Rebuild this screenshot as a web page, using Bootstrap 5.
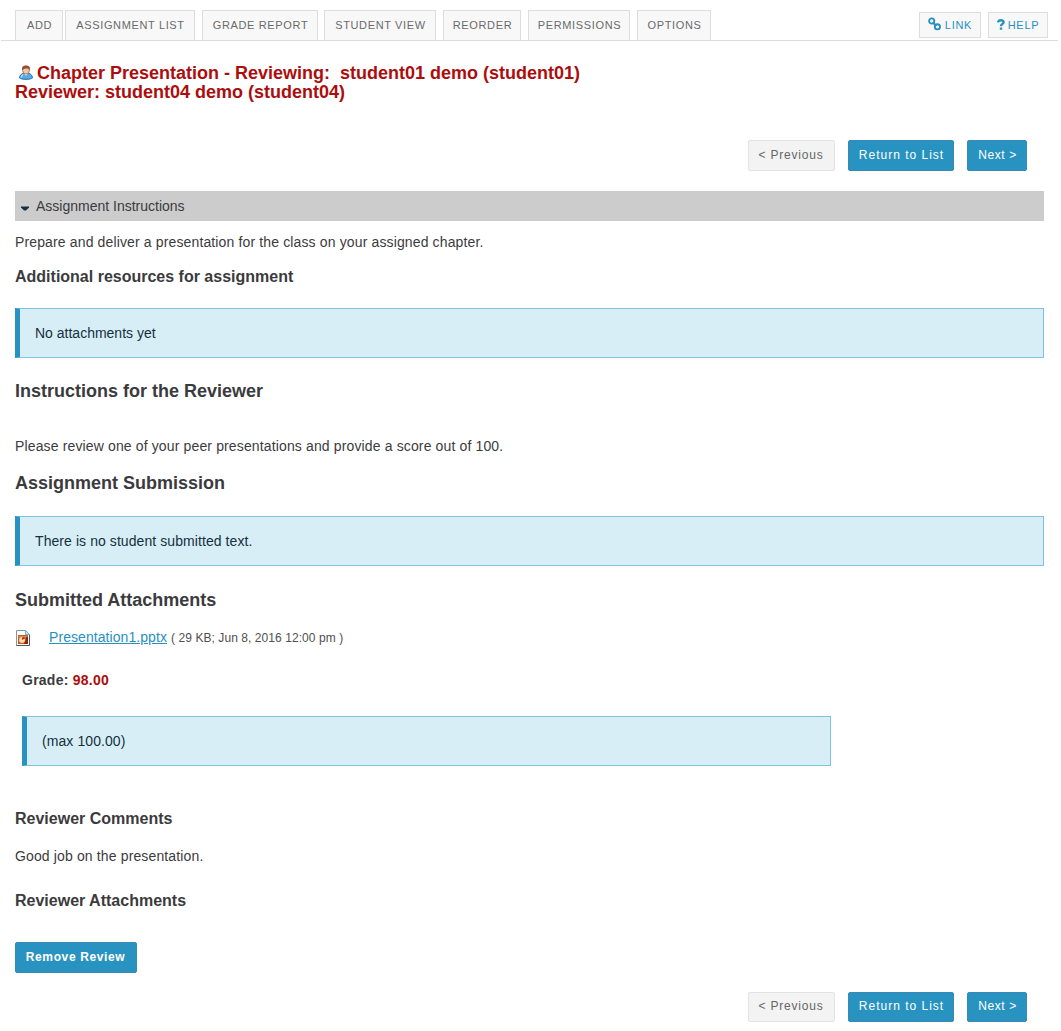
<!DOCTYPE html>
<html lang="en">
<head>
<meta charset="utf-8">
<meta name="viewport" content="width=device-width, initial-scale=1">
<title>Chapter Presentation - Reviewing</title>
<link rel="stylesheet" href="https://cdn.jsdelivr.net/npm/bootstrap@5.3.0/dist/css/bootstrap.min.css">
<style>
body{font-family:"Liberation Sans",Arial,sans-serif;font-size:14px;line-height:20px;color:#3b3b3e;background:#fff}
.tool-bar{height:41px;margin:0 3px 0 1px;padding:10px 10px 0 14px;border-bottom:1px solid #ddd}
.tool-tabs .nav-link{height:30px;padding:0;border:1px solid #ddd;border-bottom:0;border-radius:0;background:#f8f8f8;color:#6a6a6a;font-size:11px;line-height:29px;letter-spacing:.64px;text-align:center;text-transform:uppercase;white-space:nowrap;text-indent:1px}
.t-add{width:48px;margin-right:2px}.t-list{width:130px;margin-right:7px}.t-grade{width:116px;margin-right:6px}.t-student{width:112px;margin-right:7px}.t-reorder{width:78px;margin-right:7px}.t-perm{width:102px;margin-right:7px}.t-opt{width:74px}
.tool-links{gap:7px}
.btn-tool{--bs-btn-padding-x:0;--bs-btn-padding-y:0;height:26px;margin-top:2px;border:1px solid #ddd;border-radius:0;background:#f8f8f8;color:#2890c0;font-size:11px;letter-spacing:.7px;line-height:24px}
.b-link{width:62px}.b-help{width:60px}
.b-link svg{margin:-3px 4px 0 0}.b-help svg{margin:-1px 3px 0 0}
.page-main{margin:23px 17px 0 15px}
.page-title{font-size:18px;line-height:19px;font-weight:700;color:#ac0d0d;margin:0 0 38px}
.user-icon{width:14px;height:15px;margin:0 4px 0 4px;vertical-align:-1px}
.pager{gap:13px;padding-right:17px}
.btn-act{--bs-btn-padding-x:0;--bs-btn-padding-y:0;--bs-btn-font-size:12px;--bs-btn-line-height:28px;--bs-btn-border-radius:2px;letter-spacing:1px;height:31px;padding-bottom:1px;padding-left:1px;
 --bs-btn-bg:#2893c1;--bs-btn-color:#fff;--bs-btn-border-color:#3989b5;--bs-btn-hover-bg:#217ca4;--bs-btn-hover-color:#fff}
.btn-act{display:flex;align-items:flex-start;justify-content:center;--bs-btn-line-height:29px}
.btn-prev{--bs-btn-bg:#f3f3f3;--bs-btn-color:#666;--bs-btn-border-color:#e6e2e2;--bs-btn-hover-bg:#e8e8e8;--bs-btn-hover-color:#444}
.w-prev{width:87px;letter-spacing:.8px;padding-right:1px;padding-left:0}.w-list{width:106px}.w-next{width:60px;letter-spacing:.6px}.w-remove{width:122px;letter-spacing:.62px;margin-top:31px;padding-left:0;padding-right:1px}
.pager-end{margin-top:19px}
.pager-end .btn-act{height:30px;--bs-btn-line-height:27px}
.section-bar{height:30px;margin-top:20px;padding-left:6px;background:#ccc}
.section-bar svg{margin:4px 7px 0 0}
h2,h3,p{margin:0}
h2{font-size:18px;font-weight:700;line-height:20px}
h3{font-size:16px;font-weight:700;line-height:20px}
.prose{letter-spacing:.137px}
.after-bar{margin-top:11px}.h-res{margin-top:15px}.box-res{margin-top:21px!important}
.h-instr{margin-top:23px}.p-instr{margin-top:35px}.h-sub{margin-top:17px}.box-sub{margin-top:23px!important;letter-spacing:.075px}
.h-att{margin-top:24px}.h-com{margin-top:43px}.p-com{margin-top:17px}.h-ratt{margin-top:25px}
.info-box{height:50px;padding:0 15px;border:1px solid #7cc4de;border-left:5px solid #2893c1;border-radius:0;background:#d8eef7;color:#15303e;margin:0}
.file-row{height:20px;margin-top:17px}
.file-row svg{margin:2px 18px 0 0}
.file-row a{color:#2890c0;text-decoration:underline;text-underline-offset:1px;letter-spacing:.07px}
.file-meta{font-size:12px;margin-left:4px;padding-top:1px;color:#505050;letter-spacing:.07px}
.grade-line{margin:23px 0 0 7px;letter-spacing:.25px}
.grade-box{margin:26px 213px 0 7px;letter-spacing:.08px}
.score{color:#ac0d0d}
</style>
</head>
<body>
<nav class="tool-bar d-flex justify-content-between align-items-start">
 <div class="nav tool-tabs flex-nowrap">
  <a class="nav-link t-add" href="#">Add</a><a class="nav-link t-list" href="#">Assignment List</a><a class="nav-link t-grade" href="#">Grade Report</a><a class="nav-link t-student" href="#">Student View</a><a class="nav-link t-reorder" href="#">Reorder</a><a class="nav-link t-perm" href="#">Permissions</a><a class="nav-link t-opt" href="#">Options</a>
 </div>
 <div class="tool-links d-flex">
  <a class="btn btn-tool b-link d-flex justify-content-center align-items-center" href="#"><svg width="13" height="14" viewBox="0 0 13 14" fill="none" stroke="#2890c0" stroke-width="1.900"><circle cx="3.700" cy="4" r="2.600"/><circle cx="9.400" cy="9.800" r="2.600"/><path d="M4.600 5.600 8.500 8.800"/></svg>LINK</a>
  <a class="btn btn-tool b-help d-flex justify-content-center align-items-center" href="#"><svg width="8" height="11" viewBox="0 0 8 11" fill="none" stroke="#2890c0" stroke-width="2.400"><path d="M1 3.400C1.400.6 6.600.6 6.600 3.200 6.600 5 4 4.800 4 7.200M4 8.400V10.800"/></svg>HELP</a>
 </div>
</nav>
<main class="page-main">
 <h1 class="page-title"><svg class="user-icon" viewBox="0 0 14 15"><path d="M.5 13C.5 10.500 2.500 8.500 5 8h4c2.500.5 4.500 2.500 4.500 5-2 1.800-11 1.800-13 0Z" fill="#58aae4" stroke="#286fae"/><path d="M2.200 12.500c0-1.500.8-2.500 2-3" stroke="#b9e0fa" stroke-width="1.300" fill="none"/><path d="M5 8.200 7 10.800 9 8.200Z" fill="#fff"/><ellipse cx="7" cy="5.300" rx="3.400" ry="3.800" fill="#f4c6a0" stroke="#a66b4b" stroke-width=".8"/><path d="M3.100 5.500C2.500 1.500 4.300.4 7 .4s4.500 1.100 3.900 5.100C10 4.500 9.800 3.500 8.500 3.400 6.500 3.600 4.500 3.300 3.100 5.500Z" fill="#8d5137"/></svg>Chapter Presentation - Reviewing:&nbsp; student01 demo (student01)<br>Reviewer: student04 demo (student04)</h1>
 <div class="pager d-flex justify-content-end">
  <button class="btn btn-act btn-prev w-prev">&lt; Previous</button><button class="btn btn-act w-list">Return to List</button><button class="btn btn-act w-next">Next &gt;</button>
 </div>
 <div class="section-bar d-flex align-items-center"><svg width="8" height="5" viewBox="0 0 8 5"><path d="M0 .500H8V1.500L5 4.500H3L0 1.500Z" fill="#10324a"/></svg>Assignment Instructions</div>
 <p class="prose after-bar">Prepare and deliver a presentation for the class on your assigned chapter.</p>
 <h3 class="h-res">Additional resources for assignment</h3>
 <div class="alert info-box box-res d-flex align-items-center">No attachments yet</div>
 <h2 class="h-instr">Instructions for the Reviewer</h2>
 <p class="prose p-instr">Please review one of your peer presentations and provide a score out of 100.</p>
 <h2 class="h-sub">Assignment Submission</h2>
 <div class="alert info-box box-sub d-flex align-items-center">There is no student submitted text.</div>
 <h2 class="h-att">Submitted Attachments</h2>
 <div class="file-row d-flex align-items-center">
  <svg width="16" height="16" viewBox="0 0 16 16"><path d="M1.500.5h9l4 4v11h-13Z" fill="#fff" stroke="#8496a5"/><path d="M14.500 5v10.500h-13" fill="none" stroke="#555"/><path d="M10.500.5v4h4Z" fill="#c9edfa" stroke="#5fb5dc"/><rect x="3" y="5" width="10" height="9" fill="#c35a24"/><path d="M3.500 6h9v1.500h-9Z" fill="#e08a45"/><circle cx="7" cy="10" r="2.900" fill="#ffdcaa"/><path d="M7 10V7.500l2-.5 1 1.500Z" fill="#a63a1c"/><path d="M11 7h2v7H8.500Q11.500 11 11 7Z" fill="#8e2415"/></svg><a href="#">Presentation1.pptx</a><span class="file-meta">( 29 KB; Jun 8, 2016 12:00 pm )</span>
 </div>
 <p class="grade-line fw-bold">Grade: <span class="score">98.00</span></p>
 <div class="alert info-box grade-box d-flex align-items-center">(max 100.00)</div>
 <h3 class="h-com">Reviewer Comments</h3>
 <p class="prose p-com">Good job on the presentation.</p>
 <h3 class="h-ratt">Reviewer Attachments</h3>
 <button class="btn btn-act w-remove fw-bold">Remove Review</button>
 <div class="pager pager-end d-flex justify-content-end">
  <button class="btn btn-act btn-prev w-prev">&lt; Previous</button><button class="btn btn-act w-list">Return to List</button><button class="btn btn-act w-next">Next &gt;</button>
 </div>
</main>
<script src="https://cdn.jsdelivr.net/npm/bootstrap@5.3.0/dist/js/bootstrap.bundle.min.js"></script>
</body>
</html>
